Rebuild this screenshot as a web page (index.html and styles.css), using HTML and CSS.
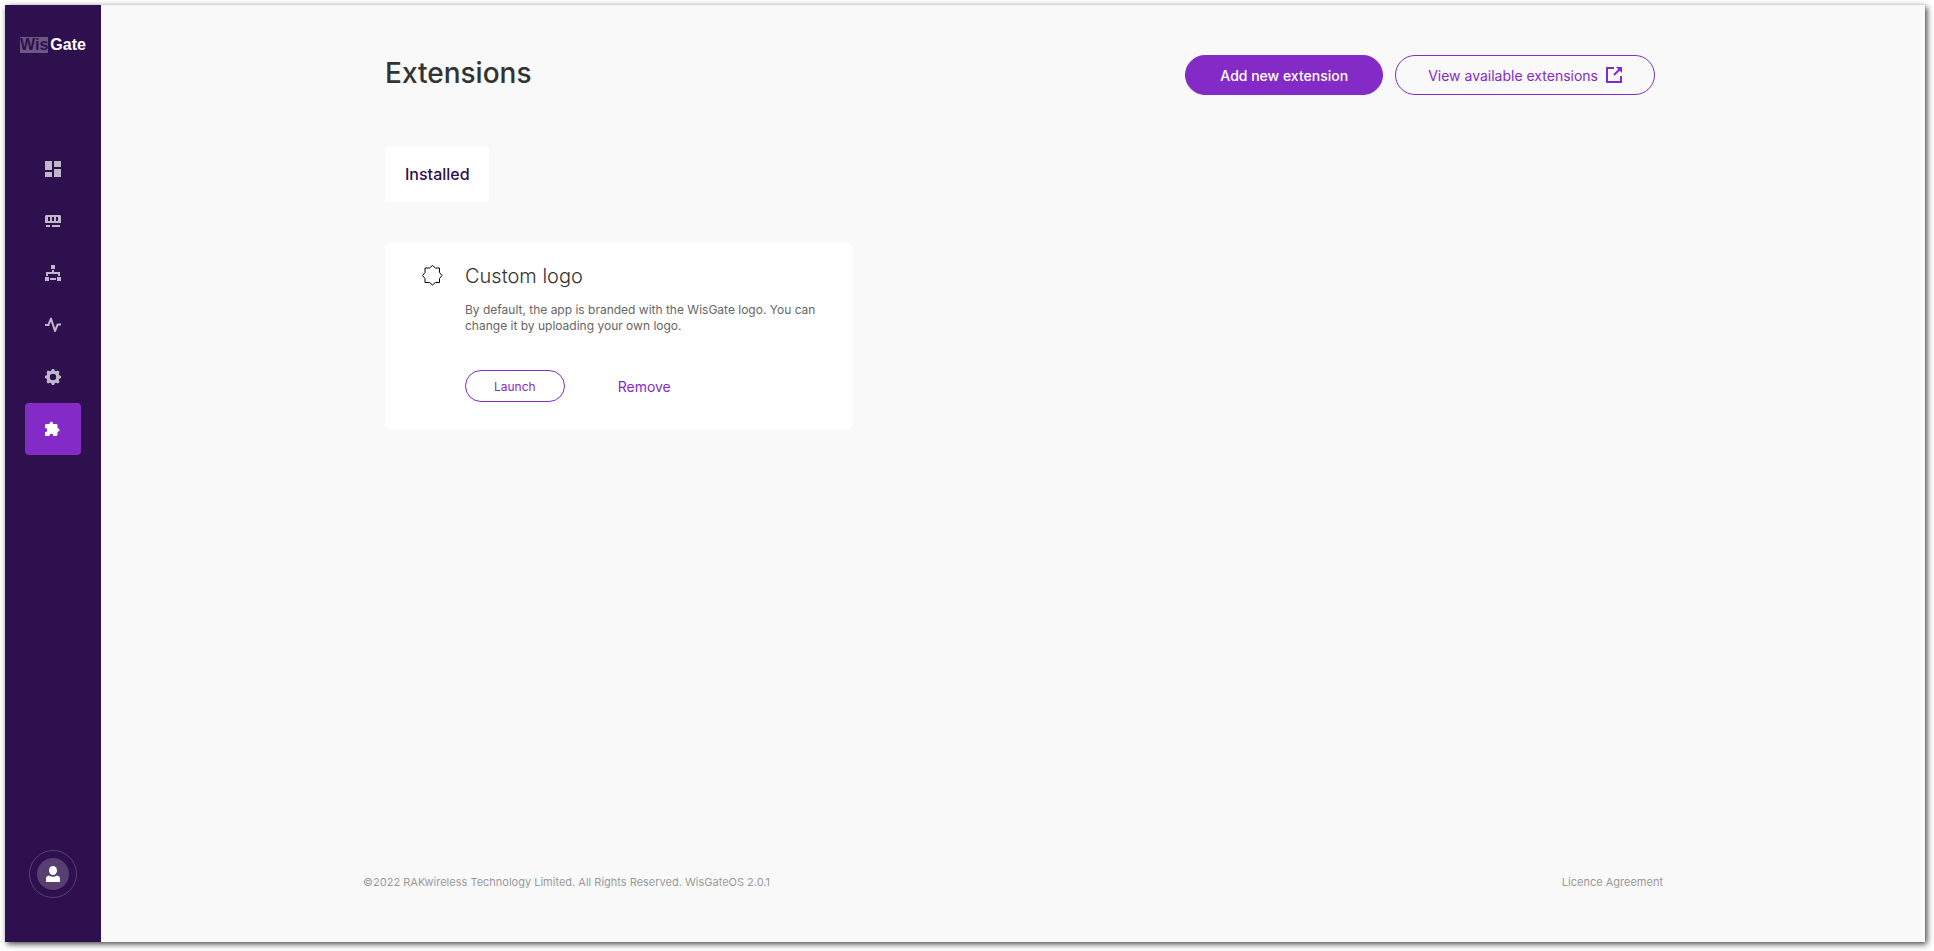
FILE: index.html
```html
<!DOCTYPE html>
<html lang="en">
<head>
<meta charset="utf-8">
<title>Extensions - WisGate</title>
<link rel="stylesheet" href="styles.css">
</head>
<body>
<div class="window">
  <aside class="sidebar">
    <a class="logo" href="#" aria-label="WisGate"><span class="logo-wis">Wis</span><span class="logo-gate">Gate</span></a>
    <nav class="nav" aria-label="Main">
      <a class="nav-item" href="#" aria-label="Dashboard">
        <svg class="nav-icon" viewBox="0 0 16 16"><path d="M0 0h7v9H0zM9 0h7v6H9zM0 11h7v5H0zM9 8h7v8H9z"/></svg>
      </a>
      <a class="nav-item" href="#" aria-label="LoRa">
        <svg class="nav-icon" viewBox="0 0 16 16"><path fill-rule="evenodd" d="M1 2h14l1 1v7H0V3zM3 4v4h2V4zM7 4v4h2V4zM11 4v4h2V4zM1 12h4v2H1zM7 12h8v2H7z"/></svg>
      </a>
      <a class="nav-item" href="#" aria-label="Network">
        <svg class="nav-icon" viewBox="0 0 16 16"><path d="M6 0h4v4H6zM7 5h2v2h6v4h-2V9H3v2H1V7h6zM0 12h4v4H0zM5 13h6v2H5zM12 12h4v4h-4z"/></svg>
      </a>
      <a class="nav-item" href="#" aria-label="Diagnostics">
        <svg class="nav-icon" viewBox="0 0 16 16"><path class="pulse" d="M0 8h3.400L6 1.600 10 14l2.600-6.400H16"/></svg>
      </a>
      <a class="nav-item" href="#" aria-label="Settings">
        <svg class="nav-icon" viewBox="0 0 16 16"><path fill-rule="evenodd" d="M7 0h2l.8 1.700 1.200.5 2-.7 1.500 1.500-.7 2 .5 1.200L16 7v2l-1.700.8-.5 1.200.7 2-1.500 1.500-2-.7-1.200.5L9 16H7l-.8-1.700-1.200-.5-2 .7L1.500 13l.7-2-.5-1.200L0 9V7l1.700-.8.5-1.200-.7-2L3 1.500l2 .7 1.200-.5zM8 4.800a3.200 3.200 0 1 0 0 6.400 3.200 3.200 0 1 0 0-6.400z"/></svg>
      </a>
      <a class="nav-item nav-item-active" href="#" aria-label="Extensions" aria-current="page">
        <svg class="nav-icon" viewBox="0 0 16 16"><path d="M1.400 3H4.500V2.500a1.800 1.800 0 0 1 3.600 0V3h3a1.400 1.400 0 0 1 1.400 1.400v2.900h.3a1.700 1.700 0 0 1 0 3.400h-.3v2.900a1.400 1.400 0 0 1-1.400 1.400H8.300v-.4a1.900 1.900 0 0 0-3.800 0v.4H0v-4.100h.4a1.900 1.900 0 0 0 0-3.800H0V4.400A1.400 1.400 0 0 1 1.400 3z"/></svg>
      </a>
    </nav>
    <button class="account" type="button" aria-label="Account">
      <span class="account-disc"><svg class="account-icon" viewBox="0 0 14 16"><ellipse cx="7" cy="4.500" rx="4" ry="4.500"/><path d="M0 16v-3.500Q0 10 3 9.500Q7 12 11 9.500Q14 10 14 12.500V16z"/></svg></span>
    </button>
  </aside>

  <div class="page">
    <main class="content">
      <header class="page-header">
        <h1 class="title">Extensions</h1>
        <div class="actions">
          <button class="button button-filled" type="button">Add new extension</button>
          <a class="button button-outline" href="#">View available extensions
            <svg class="external-icon" viewBox="0 0 16 16"><path d="M8 1H1v14h14V9M8 8l6-6"/><path class="external-head" d="M10 0h6v6z"/></svg>
          </a>
        </div>
      </header>
      <button class="tab" type="button">Installed</button>
      <article class="card">
        <svg class="card-icon" viewBox="0 0 22 22"><path d="M11.500 1.500l3 2.500h4v4.500l2.500 3-2.500 3V18.500h-4l-3 2.500-3-2.500h-4.500V14.500L1.500 11.500l2.500-3V4h4.500z"/></svg>
        <div class="card-body">
          <h2 class="card-title">Custom logo</h2>
          <p class="card-text">By default, the app is branded with the WisGate logo. You can change it by uploading your own logo.</p>
          <div class="card-actions">
            <button class="launch" type="button">Launch</button>
            <button class="remove" type="button">Remove</button>
          </div>
        </div>
      </article>
    </main>
    <footer class="footer">
      <span>©2022 RAKwireless Technology Limited. All Rights Reserved. WisGateOS 2.0.1</span>
      <a class="licence" href="#">Licence Agreement</a>
    </footer>
  </div>
</div>
</body>
</html>
```
FILE: styles.css
```css
* {
  box-sizing: border-box;
}

body {
  margin: 0;
  padding: 5px 9px 9px 5px;
  min-height: 100vh;
  display: flex;
  background: #fff;
  color: #333;
  font-family: Inter, "Liberation Sans", sans-serif;
}

a {
  color: inherit;
  text-decoration: none;
}

button {
  margin: 0;
  padding: 0;
  border: 0;
  background: none;
  color: inherit;
  font: inherit;
  cursor: pointer;
}

.window {
  flex: 1;
  display: flex;
  background: #f9f9f9;
  box-shadow: 2px 2px 6px rgba(0, 0, 0, 0.75);
}

.sidebar {
  flex: none;
  width: 96px;
  padding: 32px 0 44px;
  display: flex;
  flex-direction: column;
  align-items: center;
  background: #2e104e;
}

.logo {
  display: flex;
  gap: 2px;
  font: bold 16px/16px "Liberation Sans", Arial, sans-serif;
}

.logo-wis {
  background: #6d5883;
  color: #2e104e;
}

.logo-gate {
  color: #fff;
}

.nav {
  margin-top: 90px;
  display: flex;
  flex-direction: column;
}

.nav-item {
  width: 56px;
  height: 52px;
  display: grid;
  place-items: center;
  border-radius: 4px;
}

.nav-item-active {
  background: #842bc7;
}

.nav-icon {
  width: 16px;
  height: 16px;
  fill: #c0b7ca;
}

.nav-item-active .nav-icon {
  fill: #fff;
}

.nav-icon .pulse {
  fill: none;
  stroke: #c0b7ca;
  stroke-width: 2;
  stroke-linejoin: round;
}

.account {
  margin-top: auto;
  width: 48px;
  height: 48px;
  display: grid;
  place-items: center;
  border: 1px solid #583f71;
  border-radius: 50%;
}

.account-disc {
  width: 32px;
  height: 32px;
  display: grid;
  place-items: center;
  border-radius: 50%;
  background: #583f71;
}

.account-icon {
  width: 14px;
  height: 16px;
  fill: #fff;
}

.page {
  flex: 1;
  width: 100%;
  max-width: 1300px;
  margin: 0 auto;
  padding: 50px 0 52px;
  display: flex;
  flex-direction: column;
}

.content {
  flex: 1;
  padding: 0 8px 0 22px;
}

.page-header {
  display: flex;
  justify-content: space-between;
  align-items: flex-start;
}

.title {
  margin: 0;
  font-size: 28px;
  font-weight: 500;
  line-height: 36px;
}

.actions {
  display: flex;
  gap: 12px;
}

.button {
  height: 40px;
  padding: 0 32px;
  display: flex;
  align-items: center;
  gap: 8px;
  border: 1px solid #842bc7;
  border-radius: 20px;
  font-size: 14px;
  white-space: nowrap;
}

.button-filled {
  padding: 0 34px;
  background: #842bc7;
  color: #fff;
  font-weight: 500;
}

.button-outline {
  color: #842bc7;
}

.external-icon {
  width: 16px;
  height: 16px;
  fill: none;
  stroke: #842bc7;
  stroke-width: 2;
}

.external-head {
  fill: #842bc7;
  stroke: none;
}

.tab {
  display: block;
  height: 56px;
  margin-top: 51px;
  padding: 0 19px 0 20px;
  border-radius: 4px;
  background: #fff;
  color: #2e104e;
  font-size: 16px;
  font-weight: 500;
}

.card {
  width: 468px;
  max-width: 100%;
  margin-top: 40px;
  padding: 22px 32px 28px 36px;
  display: flex;
  gap: 22px;
  border-radius: 8px;
  background: #fff;
}

.card-icon {
  flex: none;
  width: 22px;
  height: 22px;
  fill: none;
  stroke: #000;
}

.card-title {
  margin: 0;
  font-size: 20px;
  font-weight: 300;
  line-height: 24px;
}

.card-text {
  margin: 14px 0 0;
  color: #666;
  font-size: 12px;
  line-height: 16px;
}

.card-actions {
  margin-top: 36px;
  display: flex;
  gap: 53px;
  color: #842bc7;
}

.launch {
  height: 32px;
  padding: 0 28px;
  border: 1px solid #842bc7;
  border-radius: 16px;
  font-size: 12px;
}

.remove {
  font-size: 14px;
}

.footer {
  display: flex;
  justify-content: space-between;
  color: #999;
  font-size: 11px;
  line-height: 16px;
}
```
